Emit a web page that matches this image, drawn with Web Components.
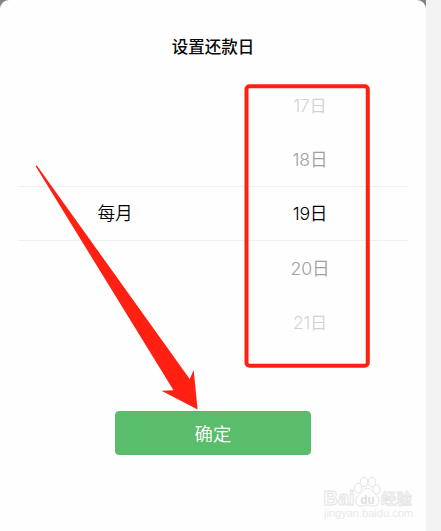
<!DOCTYPE html>
<html lang="zh-CN"><head><meta charset="utf-8"><title>设置还款日</title>
<style>html,body{margin:0;height:531px;overflow:hidden;background:#f3f3f3;font-family:Inter,"Noto Sans CJK SC",sans-serif}</style></head>
<body>
<repay-screen></repay-screen>
<script>
const define=(name,html)=>customElements.define(name,class extends HTMLElement{
  constructor(){super();const t=document.createElement('template');t.innerHTML=html;
    this.attachShadow({mode:'open'}).append(t.content.cloneNode(true));}
});
define('sheet-title',`<style>:host{display:block;height:78px;box-sizing:border-box;padding-top:35px;text-align:center;font:500 16.5px/23px "Noto Sans CJK SC",sans-serif;color:#080808}</style><slot></slot>`);
define('wheel-item',`<style>:host{display:flex;justify-content:center;align-items:center;height:54.4px;font-size:17.7px;font-weight:350;line-height:24px;color:#000;white-space:nowrap}
:host([level="1"]){color:#a0a0a0}:host([level="2"]){color:#d2d2d2}:host([level="2"]) span{font-size:17.2px}
span{letter-spacing:-.2px;padding-top:1px}</style><span><slot></slot></span>`);
define('date-wheel',`<style>:host{display:grid;grid-template-columns:194px 196px;margin:0 18px;height:272px;
background:linear-gradient(#f0f0f0,#f0f0f0) 0 108px/100% 1px no-repeat,linear-gradient(#f0f0f0,#f0f0f0) 0 162px/100% 1px no-repeat}
.m{align-self:center}</style><div class="m"><slot name="month"></slot></div><div><slot></slot></div>`);
define('confirm-button',`<style>:host{display:block;width:196px;margin:61px 0 0 115px}
button{display:block;width:196px;height:44px;padding:0;border:1px solid #56ba69;border-radius:4px;background:#59bd6c;color:#fff;font:350 18.4px/41px "Noto Sans CJK SC",sans-serif}</style><button><slot></slot></button>`);
define('red-marks',`<style>:host{position:absolute;inset:0;pointer-events:none}svg{display:block}</style>
<svg width="441" height="531"><rect x="246.5" y="86.3" width="121.3" height="279.5" rx="3" fill="none" stroke="#ff2012" stroke-width="4"/>
<path d="M36 165.5L37.2 166L189.7 379L193.7 370L197.6 409.5L161.5 390.7L173.5 390.3L35.8 166.5Z" fill="#ff2012"/></svg>`);
define('site-watermark',`<style>:host{position:absolute;left:310px;top:465px}svg{display:block}text{font-family:"Liberation Sans","Noto Sans CJK SC",sans-serif}</style>
<svg width="116" height="66" fill="#fff" stroke="#e4e4e4" stroke-width="1">
<text x="13.5" y="40" font-size="20" font-weight="700" textLength="31" lengthAdjust="spacingAndGlyphs">Bai</text>
<ellipse cx="48" cy="23" rx="3.6" ry="4.8"/><ellipse cx="54" cy="17" rx="3.7" ry="4.8"/><ellipse cx="62" cy="17" rx="3.7" ry="4.8"/><ellipse cx="66.5" cy="24.5" rx="3.5" ry="4.6"/>
<path d="M57.5 23.5C53 23.5 51.5 28 48.5 30.5C44 34 45 41 51 41C54 41 55 40 57.5 40C60 40 61.5 41 64 41C70 41 70.5 34 66.5 30.5C63.5 28 62 23.5 57.5 23.5Z"/>
<text x="50.5" y="38.5" font-size="13" font-weight="700" fill="#dedede" stroke="none" textLength="14" lengthAdjust="spacingAndGlyphs">du</text>
<text x="71" y="39" font-size="15.2" font-weight="500" stroke-width=".8" textLength="31" lengthAdjust="spacingAndGlyphs">经验</text>
<text x="14" y="52" font-size="10" fill="#e9e9e9" stroke="none" textLength="89" lengthAdjust="spacingAndGlyphs">jingyan.baidu.com</text></svg>`);
define('repay-screen',`<style>:host{display:block;position:relative;width:441px;height:531px}
.back{width:426px;height:531px;background:linear-gradient(#858386 0 20px,#fefefe 20px)}
main{height:531px;background:#fefefe;border-radius:9px 9px 0 0}</style>
<div class="back"><main><sheet-title>设置还款日</sheet-title>
<date-wheel><wheel-item slot="month">每月</wheel-item>
<wheel-item level="2">17日</wheel-item><wheel-item level="1">18日</wheel-item><wheel-item>19日</wheel-item><wheel-item level="1">20日</wheel-item><wheel-item level="2">21日</wheel-item></date-wheel>
<confirm-button>确定</confirm-button></main></div>
<site-watermark></site-watermark><red-marks></red-marks>`);
</script></body></html>
